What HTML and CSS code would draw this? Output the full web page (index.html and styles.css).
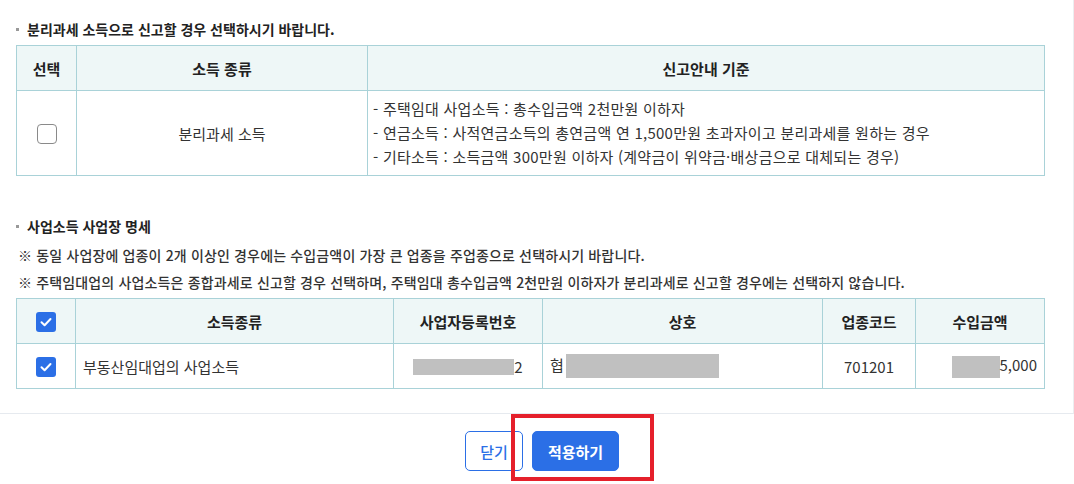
FILE: index.html
```html
<!DOCTYPE html>
<html lang="ko">
<head>
<meta charset="utf-8">
<title>분리과세 선택</title>
<link rel="stylesheet" href="styles.css">
</head>
<body>
<div class="page">
  <div class="content">
    <h3 class="sec-title">분리과세 소득으로 신고할 경우 선택하시기 바랍니다.</h3>
    <table class="grid grid-sep">
      <colgroup><col class="c-sel1"><col class="c-kind1"><col></colgroup>
      <thead>
        <tr><th>선택</th><th>소득 종류</th><th>신고안내 기준</th></tr>
      </thead>
      <tbody>
        <tr class="row-tall">
          <td class="center"><span class="chk"></span></td>
          <td class="center">분리과세 소득</td>
          <td class="desc">
            <div>- 주택임대 사업소득 : 총수입금액 2천만원 이하자</div>
            <div>- 연금소득 : 사적연금소득의 총연금액 연 1,500만원 초과자이고 분리과세를 원하는 경우</div>
            <div>- 기타소득 : 소득금액 300만원 이하자 (계약금이 위약금·배상금으로 대체되는 경우)</div>
          </td>
        </tr>
      </tbody>
    </table>

    <h3 class="sec-title sec-title-2">사업소득 사업장 명세</h3>
    <p class="note">※ 동일 사업장에 업종이 2개 이상인 경우에는 수입금액이 가장 큰 업종을 주업종으로 선택하시기 바랍니다.</p>
    <p class="note">※ 주택임대업의 사업소득은 종합과세로 신고할 경우 선택하며, 주택임대 총수입금액 2천만원 이하자가 분리과세로 신고할 경우에는 선택하지 않습니다.</p>
    <table class="grid grid-biz">
      <colgroup>
        <col class="c-sel2"><col class="c-kind2"><col class="c-reg"><col class="c-name"><col class="c-code"><col>
      </colgroup>
      <thead>
        <tr>
          <th><span class="chk on"><svg viewBox="0 0 20 20" width="20" height="20"><polyline points="5.5,10.2 8.6,13.2 14.5,7" fill="none" stroke="#fff" stroke-width="2" stroke-linecap="round" stroke-linejoin="round"/></svg></span></th>
          <th>소득종류</th><th>사업자등록번호</th><th>상호</th><th>업종코드</th><th>수입금액</th>
        </tr>
      </thead>
      <tbody>
        <tr>
          <td class="center"><span class="chk on"><svg viewBox="0 0 20 20" width="20" height="20"><polyline points="5.5,10.2 8.6,13.2 14.5,7" fill="none" stroke="#fff" stroke-width="2" stroke-linecap="round" stroke-linejoin="round"/></svg></span></td>
          <td class="left">부동산임대업의 사업소득</td>
          <td class="center"><span class="mask mask-reg"></span>2</td>
          <td class="left">협<span class="mask mask-name"></span></td>
          <td class="center">701201</td>
          <td class="right"><span class="mask mask-amt"></span>5,000</td>
        </tr>
      </tbody>
    </table>
  </div>
  <div class="footer">
    <button class="btn btn-line">닫기</button>
    <button class="btn btn-fill">적용하기</button>
  </div>
  <div class="highlight"></div>
</div>
</body>
</html>
```

FILE: styles.css
```css
* { box-sizing: border-box; }
html, body { margin: 0; padding: 0; background: #fff; }
body {
  font-family: "Noto Sans CJK KR", "Noto Sans", sans-serif;
  color: #333;
  font-size: 14px;
}
.page {
  position: relative;
  width: 1074px;
  height: 484px;
  overflow: hidden;
}
.content {
  padding: 19px 29px 24px 16px;
  border-right: 1px solid #eceef0;
  border-bottom: 1px solid #e6eaef;
  height: 414px;
}
.sec-title {
  margin: 0 0 6px 0;
  font-size: 14px;
  line-height: 20px;
  font-weight: 700;
  color: #222;
  padding-left: 11px;
  position: relative;
}
.sec-title::before {
  content: "";
  position: absolute;
  left: 0;
  top: 9px;
  width: 3px;
  height: 3px;
  background: #999;
}
.sec-title-2 { margin-top: 40px; margin-bottom: 6px; }
.note {
  margin: 0;
  font-size: 14px;
  line-height: 27px;
  font-weight: 500;
  color: #333;
  padding-left: 2px;
  letter-spacing: 0.15px;
}
.grid {
  width: 1029px;
  border-collapse: collapse;
  table-layout: fixed;
}
.grid th, .grid td {
  border: 1px solid #a9d2d8;
  font-size: 15px;
}
.grid th {
  background: #eef7f7;
  font-weight: 700;
  color: #222;
  height: 45px;
  text-align: center;
  padding: 0;
}
.grid td {
  height: 45px;
  color: #333;
  padding: 0 7px;
}
.grid .row-tall td { height: 85px; }
.grid-biz { margin-top: 2px; }
.c-sel1 { width: 60px; }
.c-kind1 { width: 291px; }
.c-sel2 { width: 59px; }
.c-kind2 { width: 318px; }
.c-reg { width: 149px; }
.c-name { width: 280px; }
.c-code { width: 93px; }
.center { text-align: center; }
.left { text-align: left; }
.right { text-align: right; }
.desc { line-height: 24px; padding-left: 5px !important; letter-spacing: 0.25px; }
.chk {
  display: inline-block;
  width: 20px;
  height: 20px;
  border: 1px solid #8a8a8a;
  border-radius: 4px;
  background: #fff;
  vertical-align: middle;
}
.chk.on {
  border: none;
  background: #2b6fe6;
  border-radius: 3px;
}
.chk svg { display: block; }
.mask {
  display: inline-block;
  background: #c0c0c0;
  vertical-align: middle;
}
.mask-reg { width: 101px; height: 16px; margin-top: -2px; }
.mask-name { width: 153px; height: 24px; margin-left: 2px; }
.mask-amt { width: 48px; height: 22px; }
.footer {
  display: flex;
  justify-content: center;
  gap: 9px;
  padding-top: 17px;
  padding-left: 10px;
}
.btn {
  height: 40px;
  font-family: inherit;
  font-size: 15px;
  border-radius: 5px;
  padding: 0;
  cursor: pointer;
}
.btn-line {
  width: 58px;
  background: #fff;
  border: 1px solid #2b6fe6;
  color: #2b6fe6;
  font-weight: 500;
}
.btn-fill {
  width: 87px;
  background: #2b6fe6;
  border: 1px solid #2b6fe6;
  color: #fff;
  font-weight: 700;
}
.highlight {
  position: absolute;
  left: 511px;
  top: 414px;
  width: 143px;
  height: 67px;
  border: 4px solid #e5202b;
  pointer-events: none;
}
```
